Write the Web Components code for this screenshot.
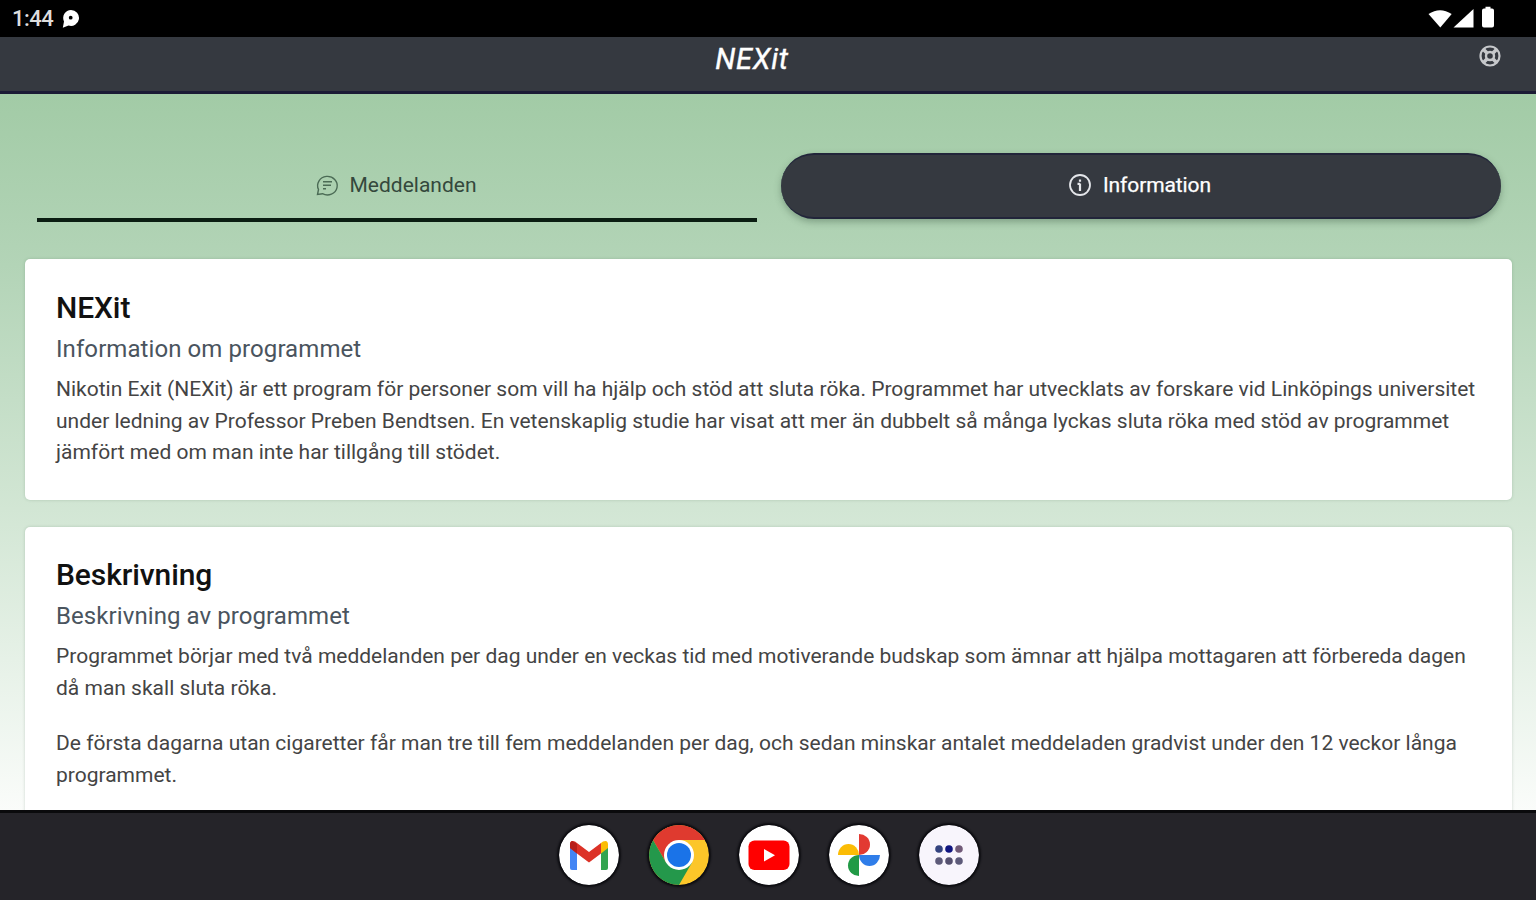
<!DOCTYPE html>
<html lang="sv"><head><meta charset="utf-8"><title>NEXit</title>
<style>
html,body{margin:0;height:100%;overflow:hidden}
body{font-family:Roboto,"Liberation Sans",sans-serif;width:1536px;height:900px}
</style></head><body>
<nexit-app></nexit-app>
<script>
const define=(name,html)=>customElements.define(name,class extends HTMLElement{
  constructor(){super();const t=document.createElement('template');t.innerHTML=html;
    this.attachShadow({mode:'open'}).append(t.content.cloneNode(true));}
});

define('status-bar',`<style>
:host{display:flex;box-sizing:border-box;height:37px;background:#000;color:#dedede;padding:0 40px 0 12px;justify-content:space-between;align-items:center}
.time{display:flex;align-items:center;gap:9px;font-size:22px;font-weight:500;line-height:37px;letter-spacing:-.5px}
svg{display:block}
.sys{display:flex;align-items:center;margin-top:-1px}
</style>
<div class="time"><span>1:44</span><svg width="20" height="20" viewBox="0 0 20 20"><path fill="#fff" fill-rule="evenodd" d="M9 1a8 8 0 1 1-2.500 15.600L.8 18.700 2 12.500A8 8 0 0 1 9 1Zm-.3 5.800a1.900 1.900 0 1 0 0 3.800 1.900 1.900 0 0 0 0-3.800Z"/></svg></div>
<svg class="sys" width="69" height="24" viewBox="0 0 69 24"><g fill="#fff"><path d="M1.500 8Q13 .3 24.700 8L13.300 21.500Z"/><path d="M26.500 21.500L46.500 3V21.500Z"/><path d="M58.500 2.500V.8h5v1.700h1.500a2 2 0 0 1 2 2V19.500a2 2 0 0 1-2 2h-8a2 2 0 0 1-2-2V4.500a2 2 0 0 1 2-2Z"/></g></svg>`);

define('app-header',`<style>
:host{display:grid;box-sizing:border-box;height:57px;grid-template-columns:44px 1fr 76px;background:#353940;border-bottom:3px solid #1b1b35;color:#fff}
.title{grid-column:2;text-align:center;font:italic 400 29px/45px Roboto,sans-serif;letter-spacing:.8px;-webkit-text-stroke:.4px #fff}
svg{display:block;margin:7px 0 0 18px}
</style>
<div class="title"><slot></slot></div>
<svg width="24" height="24" viewBox="0 0 24 24" fill="none" stroke="#c6c8cb"><circle cx="12" cy="12" r="9.500" stroke-width="2.200"/><circle cx="12" cy="12" r="4" stroke-width="2.400"/><path stroke-width="3.600" d="M5 5l4 4M19 5l-4 4M5 19l4-4M19 19l-4-4"/></svg>`);

define('nav-tab',`<style>
:host{display:flex;box-sizing:border-box;justify-content:center;align-items:center;gap:11px;height:66px;font-size:21px;color:#34483c;padding-bottom:2px;padding-right:2px}
:host([active]){background:#353940;color:#fff;border-radius:33px;box-shadow:0 3px 7px rgba(40,70,48,.35);border:2px solid #22253a;border-width:2px 0;padding-bottom:3px;letter-spacing:-.1px;-webkit-text-stroke:.25px #fff}
:host([line]){height:69px;border-bottom:4px solid #0b1d12;padding-bottom:1px}
::slotted(svg){display:block;flex:none}
</style><slot name="icon"></slot><slot></slot>`);

define('info-card',`<style>
:host{display:block;box-sizing:border-box;background:#fff;border-radius:5px;padding:30px 31px 32px;box-shadow:0 0 3px rgba(60,100,70,.25)}
:host(:not(:first-child)){padding-top:29px}
h2{margin:0;font-size:30px;line-height:38px;font-weight:500;letter-spacing:-.1px;color:#111}
h3{margin:0 0 3px;font-size:24px;line-height:44px;font-weight:400;letter-spacing:.08px;color:#4a545e}
</style><h2><slot name="title"></slot></h2><h3><slot name="sub"></slot></h3><slot></slot>`);

define('text-block',`<style>
:host{display:flex;flex-direction:column;font-size:21px;line-height:31.500px;color:#444;white-space:nowrap}
:host(:not(:last-child)){margin-bottom:24px}
</style><slot></slot>`);

define('app-dock',`<style>
:host{display:flex;box-sizing:border-box;height:90px;justify-content:center;gap:30px;background:#252429;border-top:3px solid #0a0a0c;padding-top:12px;padding-left:1px}
svg{display:block;border-radius:50%;box-shadow:0 0 2px 2px #0c0c10}
</style>
<svg width="60" height="60" viewBox="0 0 60 60"><circle cx="30" cy="30" r="30" fill="#fff"/><path fill="#4385f4" d="M11 20l7 5V45h-5a2 2 0 0 1-2-2Z"/><path fill="#33a450" d="M49 20l-7 5V45h5a2 2 0 0 0 2-2Z"/><path fill="#fbbc04" d="M42 18l2-1.500q5-2 5 3V23l-7 5.500Z"/><path fill="#dc3227" d="M11 19.500q0-5 5-3L30 27l12-9V28.500L30 37.500 18 28.500 11 23Z"/><path fill="#b71f1b" d="M11 19.500q0-3.500 2.500-3.500L18 19v9.500L11 23Z"/></svg>
<svg width="60" height="60" viewBox="0 0 60 60"><circle cx="30" cy="30" r="30" fill="#fcc629"/><path fill="#df3a2f" d="M4 15A30 30 0 0 1 56 15H30V30L17 37.500Z"/><path fill="#24984b" d="M4 15A30 30 0 0 0 30 60L43 37.500 30 30 17 37.500Z"/><circle cx="30" cy="30" r="15" fill="#fff"/><circle cx="30" cy="30" r="12" fill="#1a73e8"/></svg>
<svg width="60" height="60" viewBox="0 0 60 60"><circle cx="30" cy="30" r="30" fill="#fff"/><rect x="9.500" y="15.500" width="41" height="29.500" rx="6" fill="#f00"/><path fill="#fff" d="M25 24l11 6.300-11 6.300Z"/></svg>
<svg width="60" height="60" viewBox="0 0 60 60"><circle cx="30" cy="30" r="30" fill="#fff"/><path fill="#e23a32" d="M30 9a11 10.500 0 0 1 0 21Z"/><path fill="#2f7de9" d="M51 30a10.500 11 0 0 1-21 0Z"/><path fill="#219a46" d="M30 51a11 10.500 0 0 1 0-21Z"/><path fill="#fbbc05" d="M9 30a10.500 11 0 0 1 21 0Z"/></svg>
<svg width="60" height="60" viewBox="0 0 60 60"><circle cx="30" cy="30" r="30" fill="#f8f5fc"/><g fill="#34437f"><circle cx="20" cy="24" r="3.800"/><circle cx="30" cy="24" r="3.800" fill="#101580"/><circle cx="40" cy="24" r="3.800" fill="#715a78"/><circle cx="20" cy="36" r="3.800" fill="#5d5a79"/><circle cx="30" cy="36" r="3.800" fill="#55506f"/><circle cx="40" cy="36" r="3.800" fill="#5d5a79"/></g></svg>`);

define('nexit-app',`<style>
:host{display:grid;grid-template-rows:37px 57px 716px 90px;width:1536px;height:900px}
main{overflow:hidden;background:linear-gradient(#a2cba6,#b3d4b7 24%,#d2e6d4 58%,#fafcfa 100%);padding:59px 24px 0 25px}
nav{display:grid;grid-template-columns:720px 720px;gap:24px;padding:0 11px 0 11.500px;height:106px;align-items:start}
.cards{display:flex;flex-direction:column;gap:27px}
.cards info-card:first-child{height:241px}.cards info-card{height:400px}
</style>
<status-bar></status-bar>
<app-header>NEXit</app-header>
<main><nav>
<nav-tab line><svg slot="icon" width="24" height="24" viewBox="0 0 24 24" fill="none" stroke="#4b6b55" stroke-width="1.400"><path d="M2.500 21.500L3.500 16.500A9.800 9.300 0 1 1 7.500 20.700Z"/><path d="M8 8.800h9M8 12.300h8M8 15.800h3"/></svg><span>Meddelanden</span></nav-tab>
<nav-tab active><svg slot="icon" width="24" height="24" viewBox="0 0 24 24" fill="none" stroke="#e4e6ea"><circle cx="12" cy="12" r="10" stroke-width="1.800"/><path stroke-width="2.200" d="M12 10.500V18M12 6.500v2.200M9.500 10.800H12"/></svg><span>Information</span></nav-tab>
</nav><div class="cards">
<info-card><span slot="title">NEXit</span><span slot="sub">Information om programmet</span>
<text-block><span>Nikotin Exit (NEXit) är ett program för personer som vill ha hjälp och stöd att sluta röka. Programmet har utvecklats av forskare vid Linköpings universitet</span><span>under ledning av Professor Preben Bendtsen. En vetenskaplig studie har visat att mer än dubbelt så många lyckas sluta röka med stöd av programmet</span><span>jämfört med om man inte har tillgång till stödet.</span></text-block></info-card>
<info-card><span slot="title">Beskrivning</span><span slot="sub">Beskrivning av programmet</span>
<text-block><span>Programmet börjar med två meddelanden per dag under en veckas tid med motiverande budskap som ämnar att hjälpa mottagaren att förbereda dagen</span><span>då man skall sluta röka.</span></text-block>
<text-block><span>De första dagarna utan cigaretter får man tre till fem meddelanden per dag, och sedan minskar antalet meddeladen gradvist under den 12 veckor långa</span><span>programmet.</span></text-block></info-card>
</div></main>
<app-dock></app-dock>`);
</script></body></html>
